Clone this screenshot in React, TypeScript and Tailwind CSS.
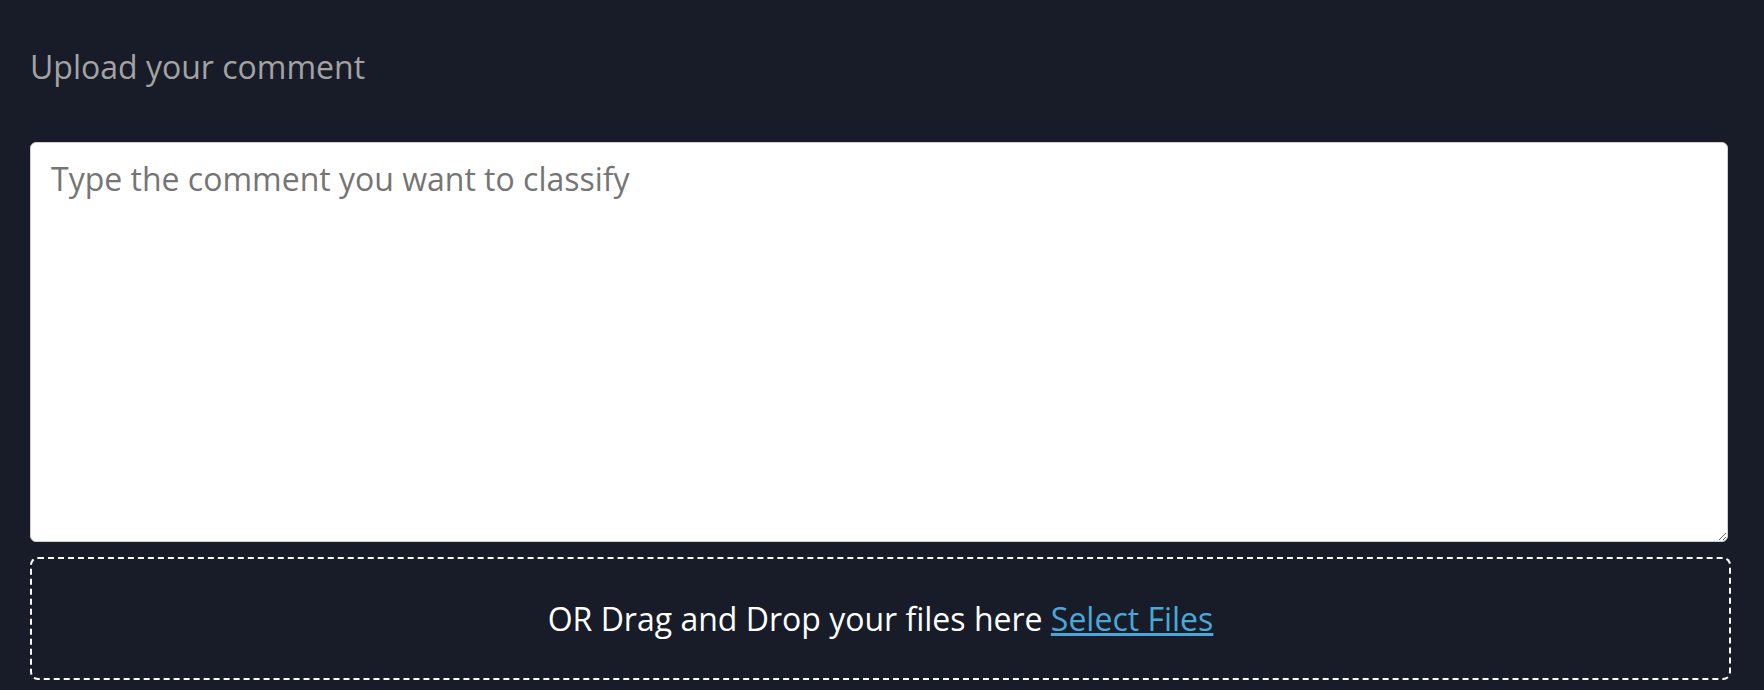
export default function App() {
  return (
    <div className="min-h-screen w-full bg-[#181c28] px-[30px] pt-[43px]" style={{ fontFamily: '"Open Sans", sans-serif' }}>
      <h2 className="text-[32px] leading-[48px] text-[#a3a3a3]">Upload your comment</h2>
      <textarea
        className="mt-[51px] block h-[400px] w-[1698px] rounded-[6px] border border-[#cfcfcf] bg-white px-[20px] py-[12px] text-[32px] leading-[48px] text-[#333] placeholder:text-[#757575] outline-none"
        placeholder="Type the comment you want to classify"
      />
      <div className="mt-[15px] flex h-[123px] w-[1701px] items-center justify-center rounded-[8px] border-2 border-dashed border-white">
        <p className="text-[32px] leading-[48px] text-white">
          OR Drag and Drop your files here{' '}
          <a href="#" className="text-[#4aa8d8] underline">Select Files</a>
        </p>
      </div>
    </div>
  );
}
